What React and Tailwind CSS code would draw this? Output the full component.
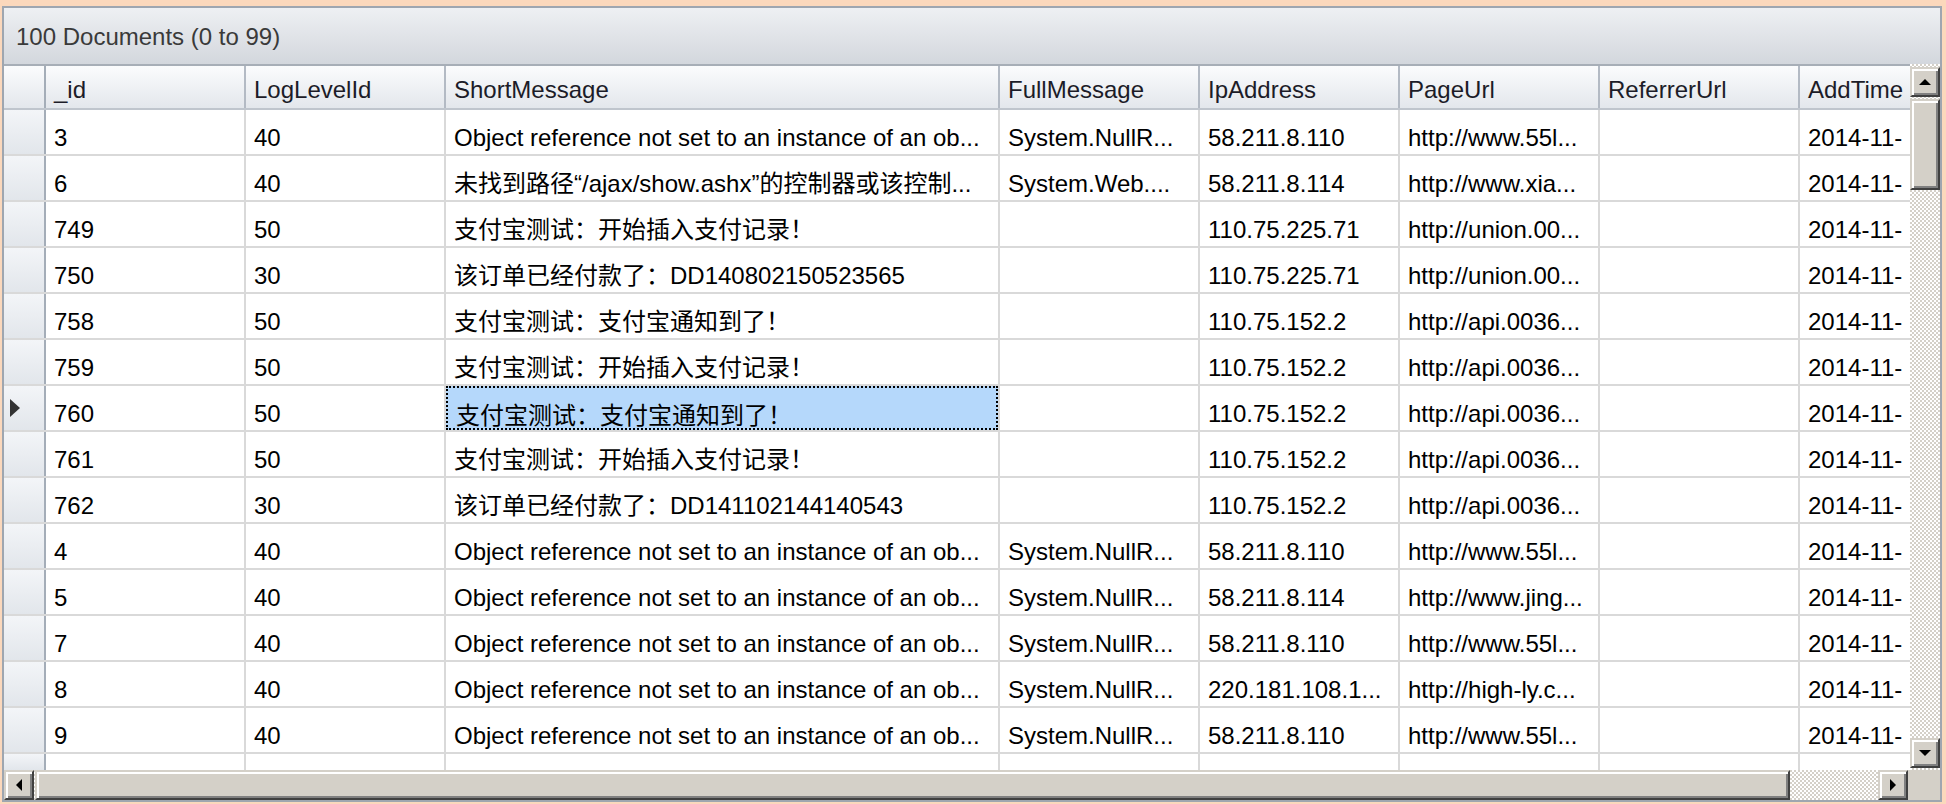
import React from 'react';

const font = { fontFamily: '"Liberation Sans", "Noto Sans CJK SC", Arial, sans-serif' };

const columns = [
  { label: '_id', w: 'w-[200px]' },
  { label: 'LogLevelId', w: 'w-[200px]' },
  { label: 'ShortMessage', w: 'w-[554px]' },
  { label: 'FullMessage', w: 'w-[200px]' },
  { label: 'IpAddress', w: 'w-[200px]' },
  { label: 'PageUrl', w: 'w-[200px]' },
  { label: 'ReferrerUrl', w: 'w-[200px]' },
  { label: 'AddTime', w: 'w-[200px]' },
];

const nullRef = 'Object reference not set to an instance of an ob...';
const pay1 = '支付宝测试：开始插入支付记录！';
const pay2 = '支付宝测试：支付宝通知到了！';

const rows = [
  ['3', '40', nullRef, 'System.NullR...', '58.211.8.110', 'http://www.55l...', '', '2014-11-'],
  ['6', '40', '未找到路径“/ajax/show.ashx”的控制器或该控制...', 'System.Web....', '58.211.8.114', 'http://www.xia...', '', '2014-11-'],
  ['749', '50', pay1, '', '110.75.225.71', 'http://union.00...', '', '2014-11-'],
  ['750', '30', '该订单已经付款了：DD140802150523565', '', '110.75.225.71', 'http://union.00...', '', '2014-11-'],
  ['758', '50', pay2, '', '110.75.152.2', 'http://api.0036...', '', '2014-11-'],
  ['759', '50', pay1, '', '110.75.152.2', 'http://api.0036...', '', '2014-11-'],
  ['760', '50', pay2, '', '110.75.152.2', 'http://api.0036...', '', '2014-11-'],
  ['761', '50', pay1, '', '110.75.152.2', 'http://api.0036...', '', '2014-11-'],
  ['762', '30', '该订单已经付款了：DD141102144140543', '', '110.75.152.2', 'http://api.0036...', '', '2014-11-'],
  ['4', '40', nullRef, 'System.NullR...', '58.211.8.110', 'http://www.55l...', '', '2014-11-'],
  ['5', '40', nullRef, 'System.NullR...', '58.211.8.114', 'http://www.jing...', '', '2014-11-'],
  ['7', '40', nullRef, 'System.NullR...', '58.211.8.110', 'http://www.55l...', '', '2014-11-'],
  ['8', '40', nullRef, 'System.NullR...', '220.181.108.1...', 'http://high-ly.c...', '', '2014-11-'],
  ['9', '40', nullRef, 'System.NullR...', '58.211.8.110', 'http://www.55l...', '', '2014-11-'],
];

const SELECTED_ROW = 6;

const checker =
  'bg-[#d4d0c8] bg-[image:repeating-conic-gradient(#d4d0c8_0_25%,#ffffff_0_50%)] bg-[length:4px_4px]';

function Btn({ className = '', children }) {
  return (
    <div
      className={`flex items-center justify-center shrink-0 bg-[#d4d0c8] border-2 border-t-[#d4d0c8] border-l-[#d4d0c8] border-r-[#404040] border-b-[#404040] shadow-[inset_2px_2px_0_#ffffff,inset_-2px_-2px_0_#808080] ${className}`}
    >
      {children}
    </div>
  );
}

function Arrow({ dir }) {
  const pts = {
    up: '0,6 6,0 12,6',
    down: '0,0 12,0 6,6',
    left: '6,0 6,12 0,6',
    right: '0,0 0,12 6,6',
  }[dir];
  const vertical = dir === 'up' || dir === 'down';
  return (
    <svg width={vertical ? 12 : 6} height={vertical ? 6 : 12} viewBox={vertical ? '0 0 12 6' : '0 0 6 12'}>
      <polygon points={pts} fill="#000" />
    </svg>
  );
}

function HeaderRow() {
  return (
    <div className="flex h-[46px] shrink-0 border-t-2 border-b-2 border-t-[#a7aeb7] border-b-[#bfc5cd] bg-linear-to-b from-[#fbfcfd] to-[#e3e7ec]">
      <div className="w-[42px] shrink-0 border-r-2 border-[#a4adb8]" />
      {columns.map((c) => (
        <div
          key={c.label}
          className={`${c.w} shrink-0 border-r-2 border-[#b3bac4] pl-[8px] pt-[12px] leading-[24px] text-[24px] text-[#1c1c28] whitespace-nowrap overflow-hidden`}
        >
          {c.label}
        </div>
      ))}
    </div>
  );
}

function DataRow({ cells, selected, partial }) {
  return (
    <div className={`flex shrink-0 ${partial ? 'h-[16px]' : 'h-[46px] border-b-2 border-[#d9d9d9]'}`}>
      <div className="w-[42px] shrink-0 border-r-2 border-[#a4adb8] bg-linear-to-b from-[#f3f5f8] to-[#e2e6eb] flex items-center pl-[6px]">
        {selected && (
          <svg width="10" height="18" viewBox="0 0 10 18">
            <polygon points="0,0 0,18 10,9" fill="#333" />
          </svg>
        )}
      </div>
      {columns.map((c, i) => {
        const isSel = selected && i === 2;
        return (
          <div key={c.label} className={`${c.w} shrink-0 border-r-2 border-[#d9d9d9] bg-white`}>
            <div
              className={`h-full pl-[8px] pt-[16px] leading-[24px] text-[24px] text-black whitespace-nowrap overflow-hidden ${
                isSel ? 'bg-[#b5d8fb] border-2 border-dotted border-black pl-[6px] pt-[14px]' : ''
              }`}
            >
              {cells ? cells[i] : ''}
            </div>
          </div>
        );
      })}
    </div>
  );
}

export default function App() {
  return (
    <div className="w-[1946px] h-[804px] bg-[#fbd8bc] pl-[2px] pt-[6px] overflow-hidden" style={font}>
      <div className="w-[1940px] h-[796px] border-2 border-[#9ea6b0] flex flex-col overflow-hidden bg-white">
        {/* title bar */}
        <div className="h-[56px] shrink-0 bg-linear-to-b from-[#eef0f3] to-[#d3d7dd] pl-[12px] pt-[17px] leading-[24px] text-[24px] text-[#3a3a3a]">
          100 Documents (0 to 99)
        </div>

        <div className="flex h-[706px] shrink-0">
          {/* grid */}
          <div className="w-[1906px] shrink-0 overflow-hidden flex flex-col bg-white">
            <HeaderRow />
            {rows.map((r, idx) => (
              <DataRow key={idx} cells={r} selected={idx === SELECTED_ROW} />
            ))}
            <DataRow partial />
          </div>

          {/* vertical scrollbar */}
          <div className={`w-[30px] shrink-0 flex flex-col pt-[3px] pb-[2px] ${checker}`}>
            <Btn className="h-[30px]">
              <Arrow dir="up" />
            </Btn>
            <Btn className="h-[91px] mt-[2px]" />
            <div className="flex-1" />
            <Btn className="h-[30px]">
              <Arrow dir="down" />
            </Btn>
          </div>
        </div>

        {/* horizontal scrollbar */}
        <div className={`h-[30px] shrink-0 flex ${checker}`}>
          <Btn className="w-[30px]">
            <Arrow dir="left" />
          </Btn>
          <Btn className="w-[1755px] ml-[1px]" />
          <div className="flex-1" />
          <Btn className="w-[30px]">
            <Arrow dir="right" />
          </Btn>
          <div className="w-[32px] shrink-0 bg-[#d4d0c8]" />
        </div>
      </div>
    </div>
  );
}
